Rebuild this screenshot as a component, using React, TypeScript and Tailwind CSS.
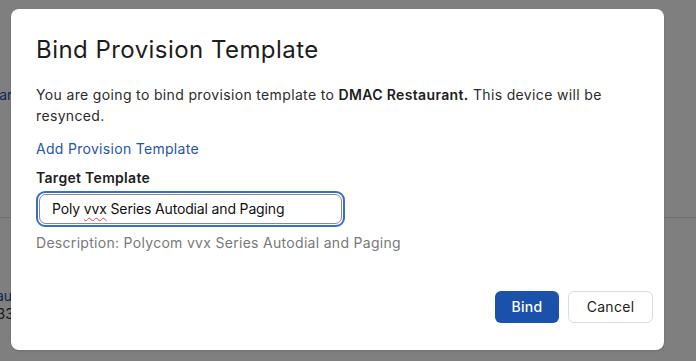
import React from "react";

export default function App() {
  return (
    <div
      className="relative h-[361px] w-[696px] overflow-hidden bg-white text-[#121212]"
      style={{ fontFamily: "Inter, 'Liberation Sans', sans-serif" }}
    >
      {/* page behind the dialog */}
      <div className="flex h-full flex-col">
        <div className="h-[84px]" />
        <div className="-ml-[10px] text-sm leading-[21px] text-[#1a4fa8]">Bar</div>
        <div className="h-[112px]" />
        <div className="h-px bg-[#dedede]" />
        <div className="h-[69px]" />
        <div className="-ml-[12px] text-sm leading-[18px] text-[#1a4fa8]">Tau</div>
        <div className="-ml-[12px] text-sm leading-[18px] text-[#333]">233</div>
      </div>

      <div className="absolute inset-0 bg-black/50">
        <div className="ml-[11px] mt-[9px] flex h-[341px] w-[653px] flex-col rounded-lg bg-white pb-[27px] pl-[25px] pr-[11px] pt-[25px] shadow-sm">
          <h2 className="text-[24px] leading-8 font-normal tracking-[0.45px] text-[#1d1d1d]">Bind Provision Template</h2>

          <p className="mt-[18px] w-[590px] text-sm leading-[21px] tracking-[0.35px] text-[#2b2b2b]">
            You are going to bind provision template to{" "}
            <span className="font-semibold text-[#1d1d1d]">DMAC Restaurant.</span> This device will be resynced.
          </p>

          <a className="mt-[12px] text-sm leading-[21px] tracking-[0.3px] text-[#1f55a8]">Add Provision Template</a>

          <label className="mt-[8px] text-sm leading-[21px] font-semibold tracking-[0.3px] text-[#1d1d1d]">
            Target Template
          </label>

          <div className="mt-[3px] w-[309px] rounded-[9px] border-2 border-[#3a6fc9] p-px">
            <div className="h-[30px] rounded-[7px] border border-[#8a8a8a] px-[12px] text-sm leading-[28px] tracking-[-0.15px] text-[#121212]">
              Poly{" "}
              <span className="underline decoration-wavy decoration-[#e5484d] decoration-1 underline-offset-[3px]">vvx</span>{" "}
              Series Autodial and Paging
            </div>
          </div>

          <p className="mt-[5px] text-sm leading-[21px] tracking-[0.3px] text-[#797979]">
            Description: Polycom vvx Series Autodial and Paging
          </p>

          <div className="mt-auto flex justify-end gap-[9px]">
            <button className="h-[32px] w-[64px] rounded-md bg-[#1a51ab] text-sm font-medium tracking-[0.3px] text-white">
              Bind
            </button>
            <button className="h-[32px] w-[85px] rounded-md border border-[#dcdcdc] bg-white text-sm tracking-[0.3px] text-[#1d1d1d]">
              Cancel
            </button>
          </div>
        </div>
      </div>
    </div>
  );
}
